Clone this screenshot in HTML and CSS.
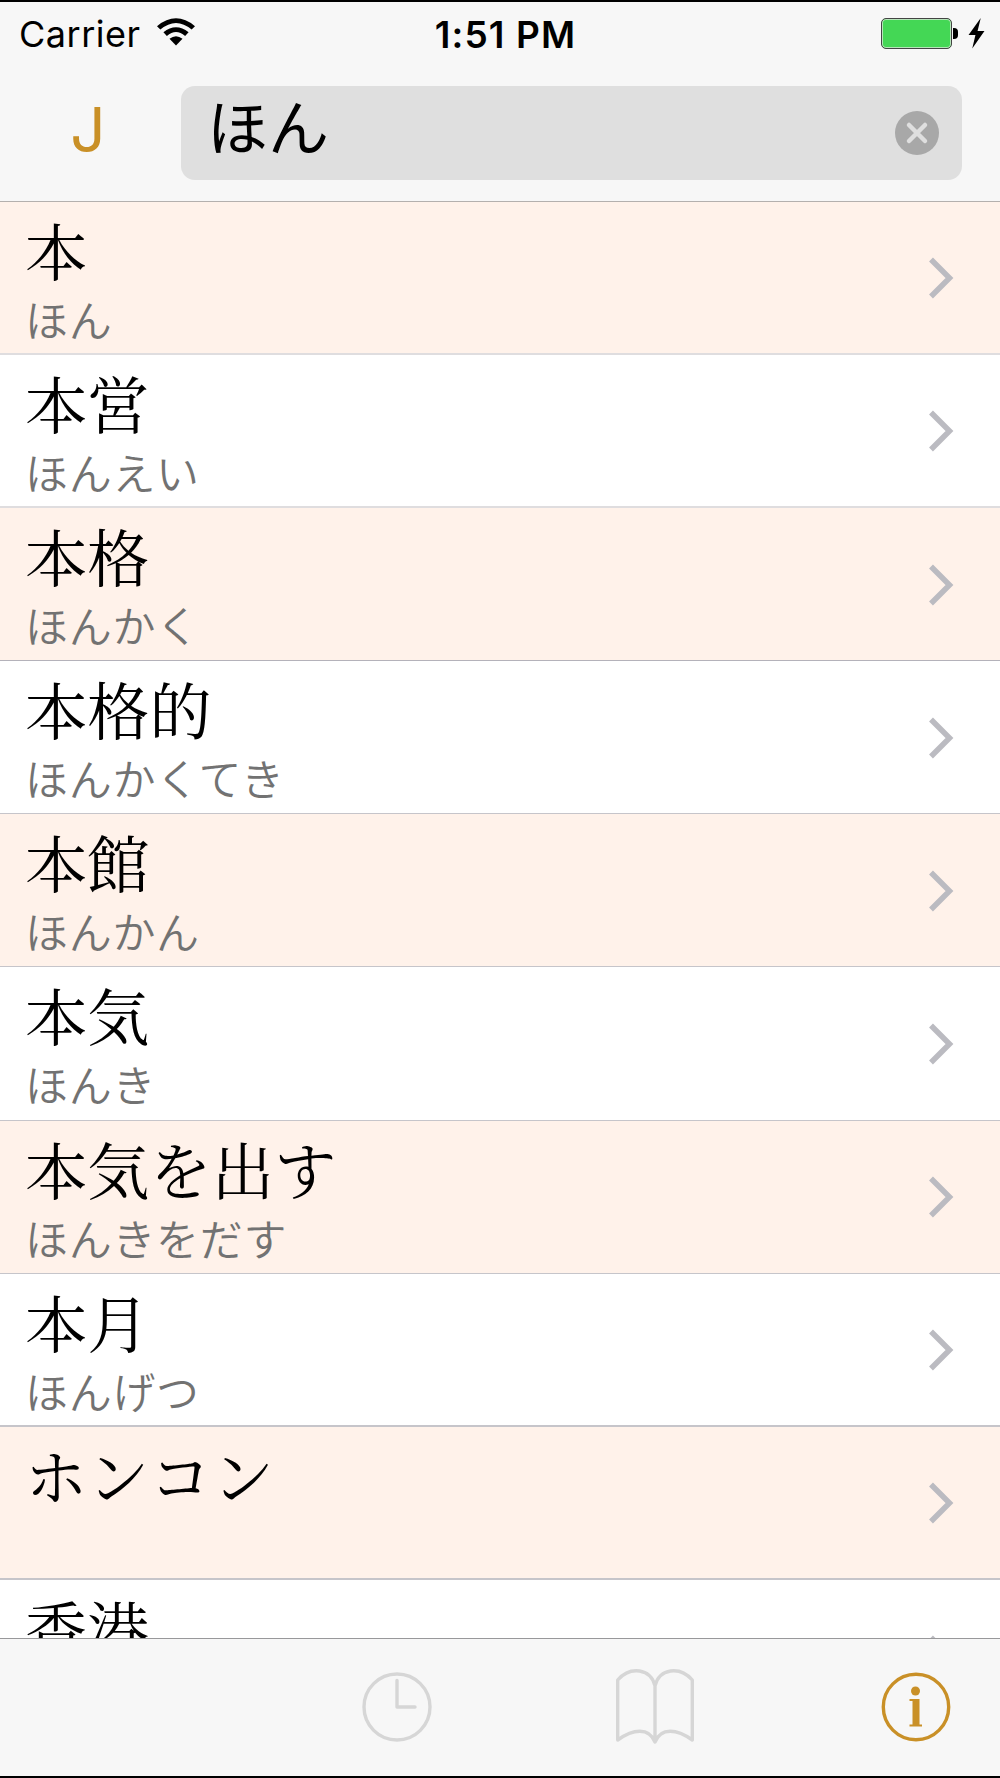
FILE: index.html
```html
<!DOCTYPE html>
<html lang="ja">

<head>
    <meta charset="UTF-8">
    <meta name="viewport" content="width=device-width, initial-scale=1.0">
    <title>Dictionary</title>
    <link rel="stylesheet" href="styles.css">
</head>

<body>
    <div class="app">
        <header class="header">
            <div class="status-bar">
                <div class="status-left">
                    <span class="carrier">Carrier</span>
                    <svg class="wifi" viewBox="1.5 0 35 28" width="38" height="28" preserveAspectRatio="none">
                        <path d="M1.5 8.2 Q19 -7.5 36.5 8.2 L33.4 11.6 Q19 -1.6 4.6 11.6 Z" />
                        <path d="M7.4 14.3 Q19 4.2 30.6 14.3 L27.4 17.9 Q19 10.3 10.6 17.9 Z" />
                        <path d="M13 20.8 Q19 15.8 25 20.8 L19 27.6 Z" />
                    </svg>
                </div>
                <div class="time">1:51 PM</div>
                <div class="status-right">
                    <div class="battery"></div>
                    <div class="battery-cap"></div>
                    <svg class="bolt" viewBox="0 0 16 30" width="17" height="31" preserveAspectRatio="none">
                        <path d="M12 0 L0.5 16.5 H7 L4 29.5 L15.5 12.5 H9 Z" />
                    </svg>
                </div>
            </div>
            <div class="search-bar">
                <button class="mode-btn">J</button>
                <div class="search-field">
                    <span class="search-text">ほん</span>
                    <svg class="clear" viewBox="0 0 44 44" width="44" height="44">
                        <circle cx="22" cy="22" r="22" />
                        <path d="M14 14 L30 30 M30 14 L14 30" />
                    </svg>
                </div>
            </div>
        </header>

        <main id="results" class="results">
            <!-- Result rows are added here -->
        </main>

        <footer class="toolbar">
            <svg class="tool clock" viewBox="0 0 70 70" width="70" height="70">
                <circle cx="35" cy="35" r="33" />
                <path d="M35 8.5 V35 H53" />
            </svg>
            <svg class="tool book" viewBox="0 0 78 76" width="78" height="76">
                <path d="M39 17 C35 -1 14 -3 1.7 11 V71 C17 60 33 58 39 73 C45 58 61 60 76.3 71 V11 C64 -3 43 -1 39 17 V73" />
            </svg>
            <svg class="tool info" viewBox="0 0 70 70" width="70" height="70">
                <circle cx="35" cy="35" r="32.7" />
                <circle class="fill" cx="34.5" cy="19" r="4.5" />
                <path class="fill" d="M28.5 27 H38.5 V52.5 H41 V54.5 H28.5 V52.5 H31.5 V29 H28.5 Z" />
            </svg>
        </footer>
    </div>

    <script>
        const entries = [
            { word: '本', reading: 'ほん' },
            { word: '本営', reading: 'ほんえい' },
            { word: '本格', reading: 'ほんかく' },
            { word: '本格的', reading: 'ほんかくてき' },
            { word: '本館', reading: 'ほんかん' },
            { word: '本気', reading: 'ほんき' },
            { word: '本気を出す', reading: 'ほんきをだす' },
            { word: '本月', reading: 'ほんげつ' },
            { word: 'ホンコン', reading: '' },
            { word: '香港', reading: '' }
        ];

        const results = document.getElementById('results');

        entries.forEach(entry => {
            const row = document.createElement('div');
            row.classList.add('row');
            row.innerHTML = `
                <div class="entry">
                    <div class="word">${entry.word}</div>
                    <div class="reading">${entry.reading}</div>
                </div>
                <svg class="chevron" viewBox="0 0 25 42" width="25" height="42">
                    <path d="M2 2.5 L20.5 21 L2 39.5" />
                </svg>
            `;
            results.appendChild(row);
        });
    </script>
</body>

</html>
```
FILE: styles.css
```css
/* Global Styles */
* {
    margin: 0;
    padding: 0;
    box-sizing: border-box;
}

body {
    background-color: #fff;
    color: #000;
    font-family: Inter, "Noto Sans CJK JP", sans-serif;
}

.app {
    display: flex;
    flex-direction: column;
    height: 1778px;
    border-top: 2px solid #000;
    border-bottom: 2px solid #000;
    overflow: hidden;
}

/* Header */
.header {
    flex: none;
    height: 200px;
    background-color: #f7f7f7;
    border-bottom: 1px solid #b4b0ae;
}

.status-bar {
    display: grid;
    grid-template-columns: 1fr auto 1fr;
    align-items: center;
    height: 64px;
    padding: 0 15px 0 19px;
}

.status-left,
.status-right {
    display: flex;
    align-items: center;
}

.status-right {
    justify-content: flex-end;
}

.carrier {
    font-size: 36px;
    letter-spacing: 0.5px;
}

.wifi {
    margin: -4px 0 0 16px;
}

.time {
    padding-left: 7px;
    font-size: 37px;
    font-weight: 600;
    letter-spacing: 1.1px;
}

.battery {
    width: 71px;
    height: 31px;
    margin-top: -2px;
    border: 1px solid #444;
    border-radius: 5px;
    background-color: #44d755;
    box-shadow: inset 0 0 0 1px #b5e5b9;
}

.battery-cap {
    width: 5px;
    height: 11px;
    margin: -2px 10px 0 1px;
    background-color: #000;
    border-radius: 0 4px 4px 0;
}

.bolt {
    margin-top: -2px;
}

.search-bar {
    display: flex;
    padding: 20px 38px 0 0;
}

.mode-btn {
    width: 181px;
    height: 93px;
    padding: 0 5px 7px 0;
    border: none;
    background: none;
    color: #c99027;
    font-family: Inter, sans-serif;
    font-size: 62px;
    font-weight: 400;
}

.search-field {
    flex: 1;
    display: flex;
    align-items: center;
    justify-content: space-between;
    height: 94px;
    padding: 0 23px 0 26px;
    border-radius: 14px;
    background-color: #dfdfdf;
}

.search-text {
    font-family: "Noto Sans CJK JP", sans-serif;
    font-size: 61px;
    font-weight: 400;
    line-height: 80px;
    margin-top: -16px;
}

.clear {
    fill: #a8a8a8;
}

.clear path {
    stroke: #dfdfdf;
    stroke-width: 4.5;
    stroke-linecap: round;
}

/* Results */
.results {
    flex: 1;
    min-height: 0;
    overflow: hidden;
}

.row {
    display: flex;
    justify-content: space-between;
    align-items: center;
    height: 153.1px;
    padding: 0 46px 0 25px;
    border-bottom: 1px solid #c6c5ca;
}

.row:nth-child(odd) {
    background-color: #fff2ea;
}

.row:nth-child(-n+2) {
    border-bottom: 2px solid #dfdddf;
}

.row:nth-child(3) {
    border-bottom-color: #b4b2ba;
}

.row:nth-child(n+8) {
    border-bottom-width: 2px;
}

.entry {
    align-self: flex-start;
    font-family: "Noto Serif CJK JP", "Noto Sans CJK JP", serif;
}

.word {
    height: 91px;
    padding-top: 12px;
    font-size: 62px;
    letter-spacing: 0.3px;
    line-height: 72px;
}

.reading {
    font-family: "Noto Sans CJK JP", sans-serif;
    font-size: 43px;
    font-weight: 350;
    letter-spacing: 0.7px;
    line-height: 50px;
    color: #727272;
}

.chevron {
    margin-top: 1px;
    fill: none;
    stroke: #bbbbc1;
    stroke-width: 5.5;
}

/* Toolbar */
.toolbar {
    flex: none;
    display: flex;
    align-items: center;
    height: 138px;
    padding: 0 49px 2px 362px;
    border-top: 1px solid #98989a;
    background-color: #f7f7f7;
}

.tool {
    fill: none;
    stroke: #d6d6d6;
    stroke-width: 3.4;
    stroke-linecap: round;
    stroke-linejoin: round;
}

.book {
    margin-left: 184px;
}

.info {
    margin-left: auto;
    stroke: #c99027;
}

.info .fill {
    fill: #c99027;
    stroke: none;
}
```
